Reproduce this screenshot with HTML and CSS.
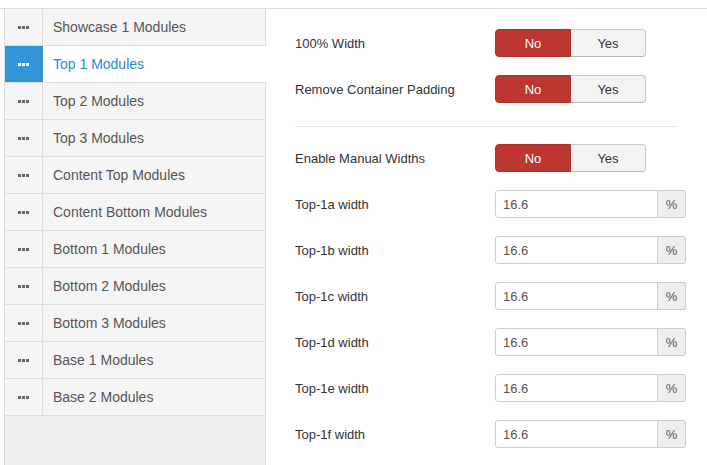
FILE: index.html
```html
<!DOCTYPE html>
<html lang="en">
<head>
  <meta charset="UTF-8" />
  <title>Module Positions</title>
  <link rel="stylesheet" href="styles.css">
</head>
<body>
  <div class="topbar"></div>

  <div class="layout">
    <!-- position tabs -->
    <ul class="tabs">
      <li class="tab"><span class="handle"><svg width="11" height="3" viewBox="0 0 11 3"><rect x="0" y="0" width="3" height="3"/><rect x="4" y="0" width="3" height="3"/><rect x="8" y="0" width="3" height="3"/></svg></span><span class="tab-name">Showcase 1 Modules</span></li>
      <li class="tab active"><span class="handle"><svg width="11" height="3" viewBox="0 0 11 3"><rect x="0" y="0" width="3" height="3"/><rect x="4" y="0" width="3" height="3"/><rect x="8" y="0" width="3" height="3"/></svg></span><span class="tab-name">Top 1 Modules</span></li>
      <li class="tab"><span class="handle"><svg width="11" height="3" viewBox="0 0 11 3"><rect x="0" y="0" width="3" height="3"/><rect x="4" y="0" width="3" height="3"/><rect x="8" y="0" width="3" height="3"/></svg></span><span class="tab-name">Top 2 Modules</span></li>
      <li class="tab"><span class="handle"><svg width="11" height="3" viewBox="0 0 11 3"><rect x="0" y="0" width="3" height="3"/><rect x="4" y="0" width="3" height="3"/><rect x="8" y="0" width="3" height="3"/></svg></span><span class="tab-name">Top 3 Modules</span></li>
      <li class="tab"><span class="handle"><svg width="11" height="3" viewBox="0 0 11 3"><rect x="0" y="0" width="3" height="3"/><rect x="4" y="0" width="3" height="3"/><rect x="8" y="0" width="3" height="3"/></svg></span><span class="tab-name">Content Top Modules</span></li>
      <li class="tab"><span class="handle"><svg width="11" height="3" viewBox="0 0 11 3"><rect x="0" y="0" width="3" height="3"/><rect x="4" y="0" width="3" height="3"/><rect x="8" y="0" width="3" height="3"/></svg></span><span class="tab-name">Content Bottom Modules</span></li>
      <li class="tab"><span class="handle"><svg width="11" height="3" viewBox="0 0 11 3"><rect x="0" y="0" width="3" height="3"/><rect x="4" y="0" width="3" height="3"/><rect x="8" y="0" width="3" height="3"/></svg></span><span class="tab-name">Bottom 1 Modules</span></li>
      <li class="tab"><span class="handle"><svg width="11" height="3" viewBox="0 0 11 3"><rect x="0" y="0" width="3" height="3"/><rect x="4" y="0" width="3" height="3"/><rect x="8" y="0" width="3" height="3"/></svg></span><span class="tab-name">Bottom 2 Modules</span></li>
      <li class="tab"><span class="handle"><svg width="11" height="3" viewBox="0 0 11 3"><rect x="0" y="0" width="3" height="3"/><rect x="4" y="0" width="3" height="3"/><rect x="8" y="0" width="3" height="3"/></svg></span><span class="tab-name">Bottom 3 Modules</span></li>
      <li class="tab"><span class="handle"><svg width="11" height="3" viewBox="0 0 11 3"><rect x="0" y="0" width="3" height="3"/><rect x="4" y="0" width="3" height="3"/><rect x="8" y="0" width="3" height="3"/></svg></span><span class="tab-name">Base 1 Modules</span></li>
      <li class="tab"><span class="handle"><svg width="11" height="3" viewBox="0 0 11 3"><rect x="0" y="0" width="3" height="3"/><rect x="4" y="0" width="3" height="3"/><rect x="8" y="0" width="3" height="3"/></svg></span><span class="tab-name">Base 2 Modules</span></li>
    </ul>

    <!-- settings for the selected position -->
    <div class="panel">
      <div class="row">
        <label class="row-label">100% Width</label>
        <div class="toggle"><span class="opt opt-no">No</span><span class="opt opt-yes">Yes</span></div>
      </div>
      <div class="row">
        <label class="row-label">Remove Container Padding</label>
        <div class="toggle"><span class="opt opt-no">No</span><span class="opt opt-yes">Yes</span></div>
      </div>

      <hr class="divider">

      <div class="row">
        <label class="row-label">Enable Manual Widths</label>
        <div class="toggle"><span class="opt opt-no">No</span><span class="opt opt-yes">Yes</span></div>
      </div>
      <div class="row">
        <label class="row-label">Top-1a width</label>
        <div class="input-group"><input class="field" type="text" value="16.6"><span class="addon">%</span></div>
      </div>
      <div class="row">
        <label class="row-label">Top-1b width</label>
        <div class="input-group"><input class="field" type="text" value="16.6"><span class="addon">%</span></div>
      </div>
      <div class="row">
        <label class="row-label">Top-1c width</label>
        <div class="input-group"><input class="field" type="text" value="16.6"><span class="addon">%</span></div>
      </div>
      <div class="row">
        <label class="row-label">Top-1d width</label>
        <div class="input-group"><input class="field" type="text" value="16.6"><span class="addon">%</span></div>
      </div>
      <div class="row">
        <label class="row-label">Top-1e width</label>
        <div class="input-group"><input class="field" type="text" value="16.6"><span class="addon">%</span></div>
      </div>
      <div class="row">
        <label class="row-label">Top-1f width</label>
        <div class="input-group"><input class="field" type="text" value="16.6"><span class="addon">%</span></div>
      </div>
    </div>
  </div>
</body>
</html>
```

FILE: styles.css
```css
body {
  margin: 0;
  background: #fff;
  font-family: "Liberation Sans", Arial, sans-serif;
  color: #333;
  overflow: hidden;
}
.topbar {
  height: 8px;
  border-bottom: 1px solid #ddd;
}
.layout {
  display: flex;
  height: 456px;
}
.tabs {
  list-style: none;
  margin: 0 0 0 4px;
  padding: 0;
  width: 260px;
  flex: none;
  background: #eee;
  border-left: 1px solid #ddd;
  border-right: 1px solid #ddd;
}
.tab {
  display: flex;
  align-items: center;
  height: 36px;
  background: #f5f5f5;
  border-bottom: 1px solid #ddd;
  font-size: 14px;
  color: #555;
}
.handle {
  width: 37px;
  height: 36px;
  border-right: 1px solid #ddd;
  display: flex;
  align-items: center;
  justify-content: center;
  fill: #666;
}
.tab-name {
  padding-left: 10px;
}
.tab.active {
  background: #fff;
  margin-right: -1px;
  color: #2b8bd0;
}
.tab.active .handle {
  background: #3595d9;
  border-right-color: #3595d9;
  fill: #fff;
}
.panel {
  flex: 1;
  padding: 20px 0 0 29px;
}
.row {
  display: flex;
  align-items: center;
  height: 28px;
  margin-bottom: 18px;
}
.row-label {
  width: 200px;
  font-size: 13px;
  color: #333;
}
.toggle {
  display: flex;
  width: 151px;
  height: 28px;
  font-size: 13px;
}
.opt {
  display: flex;
  align-items: center;
  justify-content: center;
  box-sizing: border-box;
  height: 28px;
}
.opt-no {
  width: 76px;
  background: #bd362f;
  border: 1px solid #b0322c;
  border-radius: 4px 0 0 4px;
  color: #fff;
}
.opt-yes {
  width: 75px;
  background: #f3f3f3;
  border: 1px solid #c8c8c8;
  border-left: none;
  border-bottom-color: #b8b8b8;
  border-radius: 0 4px 4px 0;
  color: #333;
}
.divider {
  border: none;
  border-top: 1px solid #e5e5e5;
  margin: 23px 30px 17px 0;
}
.input-group {
  display: flex;
  width: 191px;
  height: 28px;
}
.field {
  box-sizing: border-box;
  width: 163px;
  height: 28px;
  margin: 0;
  padding: 0 7px;
  border: 1px solid #ccc;
  border-radius: 3px 0 0 3px;
  font-family: "Liberation Sans", Arial, sans-serif;
  font-size: 13px;
  color: #555;
  background: #fff;
}
.addon {
  box-sizing: border-box;
  width: 28px;
  height: 28px;
  display: flex;
  align-items: center;
  justify-content: center;
  background: #eee;
  border: 1px solid #ccc;
  border-left: none;
  border-radius: 0 3px 3px 0;
  font-size: 13px;
  color: #555;
}
```
